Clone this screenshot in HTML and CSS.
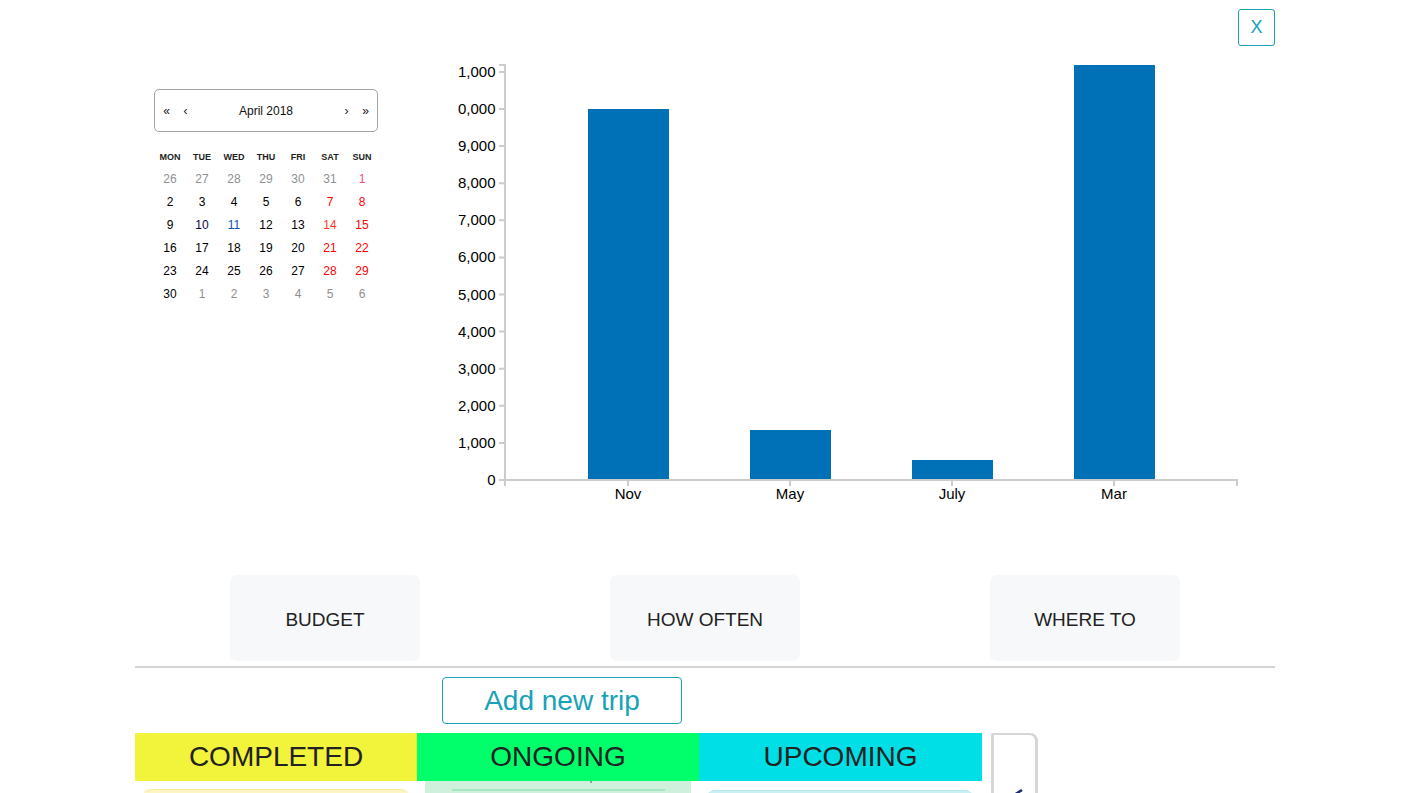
FILE: index.html
```html
<!DOCTYPE html>
<html lang="en">
<head>
<meta charset="utf-8">
<title>Trips dashboard</title>
<link rel="stylesheet" href="styles.css">
</head>
<body>
<div class="page">
  <div class="topbar">
    <button class="close-btn" type="button">X</button>
  </div>

  <div class="dash">
    <div class="calendar">
      <div class="cal-nav">
        <span class="cal-arrow">«</span>
        <span class="cal-arrow">‹</span>
        <span class="cal-label">April 2018</span>
        <span class="cal-arrow">›</span>
        <span class="cal-arrow">»</span>
      </div>
      <div class="cal-weekdays">
        <span>MON</span><span>TUE</span><span>WED</span><span>THU</span><span>FRI</span><span>SAT</span><span>SUN</span>
      </div>
      <div class="cal-days">
        <span class="other">26</span><span class="other">27</span><span class="other">28</span><span class="other">29</span><span class="other">30</span><span class="other">31</span><span class="weekend light">1</span>
        <span>2</span><span>3</span><span>4</span><span>5</span><span>6</span><span class="weekend">7</span><span class="weekend">8</span>
        <span>9</span><span class="navy">10</span><span class="blue">11</span><span>12</span><span>13</span><span class="weekend soft">14</span><span class="weekend">15</span>
        <span>16</span><span>17</span><span>18</span><span>19</span><span>20</span><span class="weekend">21</span><span class="weekend">22</span>
        <span>23</span><span>24</span><span>25</span><span>26</span><span>27</span><span class="weekend">28</span><span class="weekend">29</span>
        <span>30</span><span class="other">1</span><span class="other">2</span><span class="other">3</span><span class="other">4</span><span class="other">5</span><span class="other">6</span>
      </div>
    </div>

    <svg class="chart" width="810" height="460" viewBox="0 0 810 460">
      <g class="bars">
        <rect x="148" y="54" width="81" height="371"></rect>
        <rect x="310" y="375" width="81" height="50"></rect>
        <rect x="472" y="405" width="81" height="20"></rect>
        <rect x="634" y="10" width="81" height="415"></rect>
      </g>
      <g class="axis">
        <path d="M59,10 H65 V425 H59"></path>
        <path d="M65,431 V425 H797 V431"></path>
        <path d="M59,16.9 H65 M59,54 H65 M59,91.1 H65 M59,128.2 H65 M59,165.3 H65 M59,202.4 H65 M59,239.5 H65 M59,276.6 H65 M59,313.7 H65 M59,350.8 H65 M59,387.9 H65"></path>
        <path d="M188,425 V431 M350,425 V431 M512,425 V431 M674,425 V431"></path>
      </g>
      <g class="ylabels">
        <text x="55.5" y="22">1,000</text>
        <text x="55.5" y="59">0,000</text>
        <text x="55.5" y="96">9,000</text>
        <text x="55.5" y="133">8,000</text>
        <text x="55.5" y="170">7,000</text>
        <text x="55.5" y="207">6,000</text>
        <text x="55.5" y="244.5">5,000</text>
        <text x="55.5" y="281.5">4,000</text>
        <text x="55.5" y="318.5">3,000</text>
        <text x="55.5" y="355.5">2,000</text>
        <text x="55.5" y="393">1,000</text>
        <text x="55.5" y="430">0</text>
      </g>
      <g class="xlabels">
        <text x="188" y="444">Nov</text>
        <text x="350" y="444">May</text>
        <text x="512" y="444">July</text>
        <text x="674" y="444">Mar</text>
      </g>
    </svg>
  </div>

  <div class="stats">
    <div class="stat-col"><div class="stat-card">BUDGET</div></div>
    <div class="stat-col"><div class="stat-card">HOW OFTEN</div></div>
    <div class="stat-col"><div class="stat-card">WHERE TO</div></div>
  </div>

  <hr class="divider">

  <div class="add-row">
    <button class="add-btn" type="button">Add new trip</button>
  </div>

  <div class="status-row">
    <div class="status completed">COMPLETED</div>
    <div class="status ongoing">ONGOING</div>
    <div class="status upcoming">UPCOMING</div>
    <div class="toggle-box">
      <svg class="toggle-icon" width="16" height="20" viewBox="0 0 16 20"><path d="M14,2 L3,9 L14,16"></path></svg>
    </div>
  </div>

  <div class="lists">
    <div class="list-col"><div class="trip-card yellow"></div></div>
    <div class="list-col"><div class="ongoing-area"><span class="dot"></span><div class="ongoing-line"></div></div></div>
    <div class="list-col"><div class="trip-card cyan"></div></div>
  </div>
</div>
</body>
</html>
```

FILE: styles.css
```css
html, body {
  margin: 0;
  padding: 0;
  background: #ffffff;
  overflow: hidden;
  font-family: "Liberation Sans", Arial, Helvetica, sans-serif;
  color: #222222;
}

.page {
  width: 1140px;
  margin-left: 135px;
}

.topbar {
  display: flex;
  justify-content: flex-end;
  padding-top: 9px;
}

.close-btn {
  width: 37px;
  height: 37px;
  padding: 0;
  border: 1px solid #17a2b8;
  border-radius: 3px;
  background: #ffffff;
  color: #17a2b8;
  font-family: "Liberation Sans", Arial, sans-serif;
  font-size: 18px;
  line-height: 35px;
  text-align: center;
}

.dash {
  display: flex;
  align-items: flex-start;
  height: 529px;
}

.calendar {
  width: 224px;
  margin-left: 19px;
  margin-top: 43px;
  font-size: 12px;
}

.cal-nav {
  display: flex;
  align-items: center;
  height: 43px;
  box-sizing: border-box;
  border: 1px solid #a3a3a3;
  border-radius: 5px;
  padding: 0 2px;
  color: #111111;
}

.cal-arrow {
  width: 19px;
  text-align: center;
  font-size: 12px;
}

.cal-label {
  flex: 1;
  text-align: center;
  font-size: 12px;
}

.cal-weekdays {
  display: grid;
  grid-template-columns: repeat(7, 1fr);
  margin-top: 17px;
  height: 16px;
  line-height: 16px;
  font-size: 9px;
  font-weight: bold;
  color: #222222;
  text-align: center;
}

.cal-days {
  display: grid;
  grid-template-columns: repeat(7, 1fr);
  grid-auto-rows: 23px;
  margin-top: 3px;
  line-height: 23px;
  text-align: center;
  color: #000000;
}

.cal-days .other { color: #8f8f8f; }
.cal-days .weekend { color: #ff0000; }
.cal-days .weekend.light { color: #f0507a; }
.cal-days .weekend.soft { color: #ff3b1f; }
.cal-days .navy { color: #0a0a46; }
.cal-days .blue { color: #0b4fa8; }

.chart {
  display: block;
  margin-left: 62px;
  margin-top: 9px;
  overflow: visible;
}

.bars rect {
  fill: #0071b6;
}

.axis path {
  fill: none;
  stroke: #cccccc;
  stroke-width: 2;
}

.ylabels text,
.xlabels text {
  font-family: "Liberation Sans", Arial, sans-serif;
  font-size: 15px;
  fill: #000000;
}

.ylabels text { text-anchor: end; }
.xlabels text { text-anchor: middle; }

.stats {
  display: grid;
  grid-template-columns: repeat(3, 1fr);
}

.stat-col {
  display: flex;
  justify-content: center;
}

.stat-card {
  width: 190px;
  height: 86px;
  box-sizing: border-box;
  padding-top: 3px;
  display: flex;
  align-items: center;
  justify-content: center;
  background: #f7f8fa;
  border-radius: 7px;
  font-size: 19px;
  color: #222222;
}

.divider {
  margin: 5px 0 0 0;
  border: 0;
  height: 2px;
  background: #d4d4d4;
}

.add-row {
  margin-top: 9px;
  padding-left: 307px;
}

.add-btn {
  display: block;
  width: 240px;
  height: 47px;
  padding: 0;
  border: 1px solid #17a2b8;
  border-radius: 4px;
  background: #ffffff;
  color: #17a2b8;
  font-family: "Liberation Sans", Arial, sans-serif;
  font-size: 28px;
  line-height: 45px;
  text-align: center;
}

.status-row {
  display: flex;
  align-items: flex-start;
  height: 48px;
  margin-top: 9px;
}

.status {
  width: 282px;
  height: 48px;
  display: flex;
  align-items: center;
  justify-content: center;
  font-size: 28px;
  color: #222222;
}

.status.completed { background: #f2f33b; }
.status.ongoing { background: #00ff6b; }
.status.upcoming { background: #00dee6; width: 283px; }

.toggle-box {
  position: relative;
  flex: none;
  width: 47px;
  height: 100px;
  margin-left: 9px;
  box-sizing: border-box;
  border: 3px solid #d6d6d6;
  border-top-width: 2px;
  border-radius: 2px 8px 0 0;
}

.toggle-icon {
  position: absolute;
  left: 14px;
  top: 53px;
}

.toggle-icon path {
  fill: none;
  stroke: #1a2a6c;
  stroke-width: 2.5;
}

.lists {
  display: flex;
  width: 847px;
}

.list-col {
  width: 282px;
  padding: 0 8px;
  box-sizing: border-box;
}

.trip-card {
  margin-top: 8px;
  height: 60px;
  border-radius: 8px;
}

.trip-card.yellow {
  background: #fdf5c2;
  border-top: 1px solid #fbea9a;
}

.trip-card.cyan {
  margin-top: 9px;
  background: #caf0f3;
  border-top: 1px solid #b2e8ee;
}

.ongoing-area {
  position: relative;
  height: 80px;
  background: #cff0dc;
  padding-top: 8px;
  box-sizing: border-box;
}

.ongoing-line {
  margin: 0 26px 0 27px;
  height: 2px;
  background: #a6e6c0;
}

.dot {
  position: absolute;
  left: 165px;
  top: 0;
  width: 2px;
  height: 2px;
  background: #8aa89a;
}
```
